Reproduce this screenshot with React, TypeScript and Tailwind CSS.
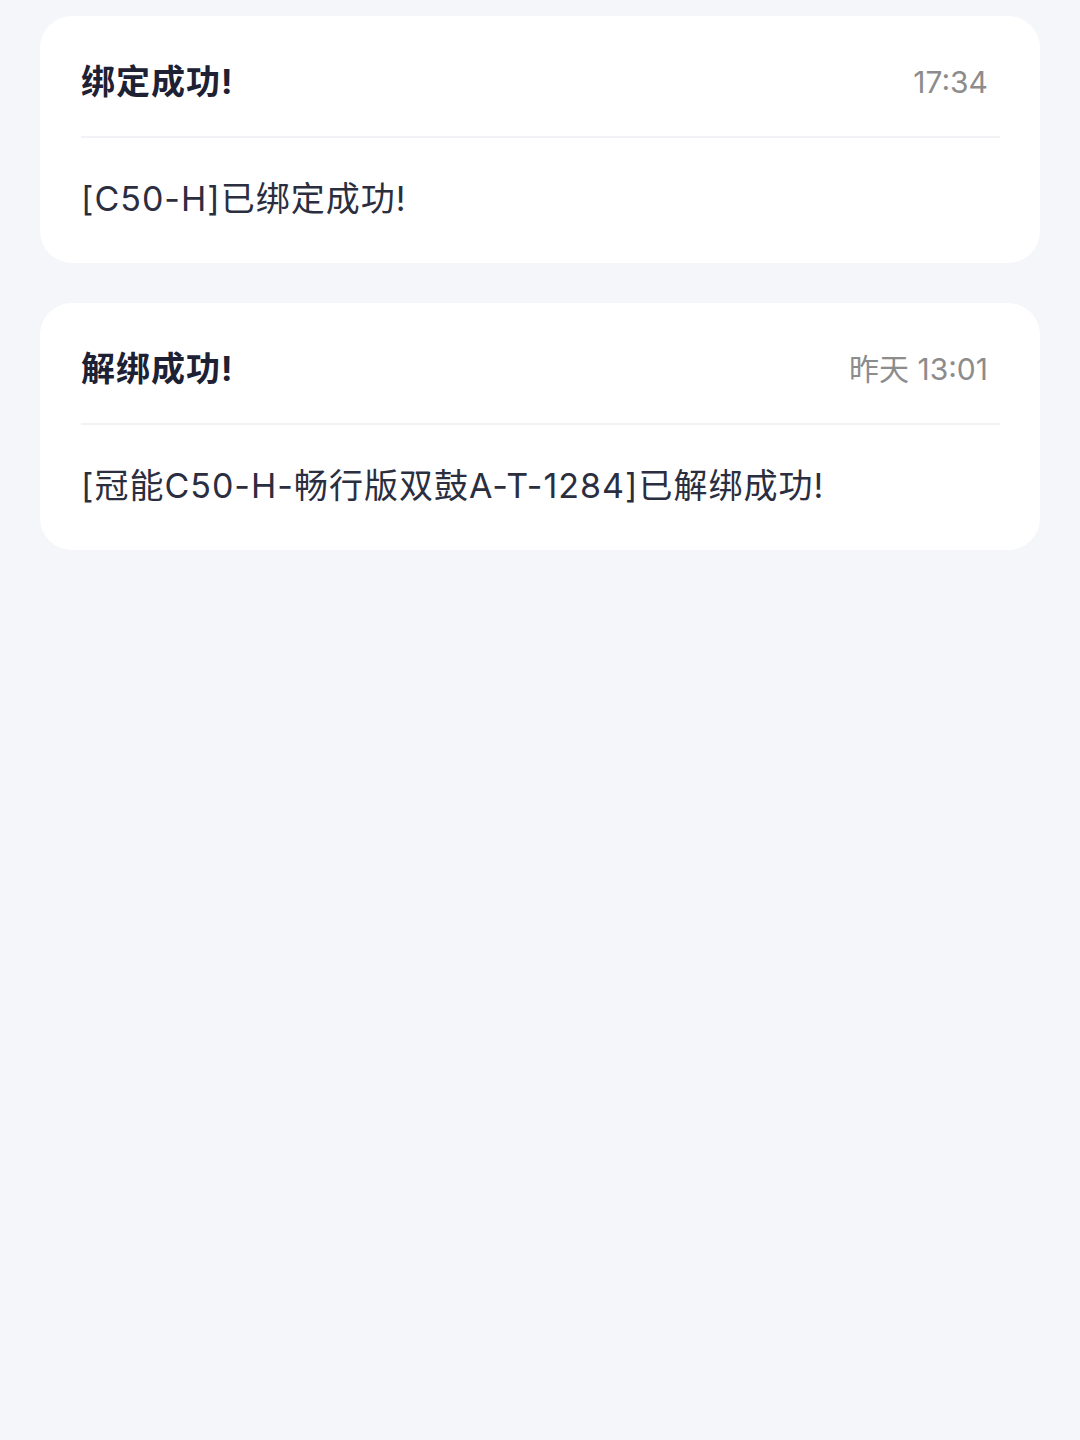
const font = { fontFamily: 'Inter, "Noto Sans CJK SC", "Noto Sans", sans-serif' };

type Notice = { title: string; time: string; body: string };

const notices: Notice[] = [
  { title: "绑定成功!", time: "17:34", body: "[C50-H]已绑定成功!" },
  { title: "解绑成功!", time: "昨天 13:01", body: "[冠能C50-H-畅行版双鼓A-T-1284]已解绑成功!" },
];

function NoticeCard({ n }: { n: Notice }) {
  return (
    <div className="bg-white rounded-[32px] pl-[41px] pr-[40px]">
      <div className="h-[120px] pt-[12px] flex items-center justify-between">
        <span className="text-[34px] font-bold text-[#1e2133] leading-none tracking-[1px]">{n.title}</span>
        <span className="text-[30px] text-[#8c8c8c] leading-none pr-[12px]">{n.time}</span>
      </div>
      <div className="h-[2px] bg-[#f1f2f5]" />
      <div className="h-[125px] pb-[4px] flex items-center">
        <span className="text-[34px] text-[#2b2e3f] leading-none tracking-[1px]">{n.body}</span>
      </div>
    </div>
  );
}

export default function App() {
  return (
    <div className="min-h-[1440px] w-full bg-[#f5f6fa] px-[40px] pt-[16px] flex flex-col gap-[40px]" style={font}>
      {notices.map((n) => (
        <NoticeCard key={n.title} n={n} />
      ))}
    </div>
  );
}
